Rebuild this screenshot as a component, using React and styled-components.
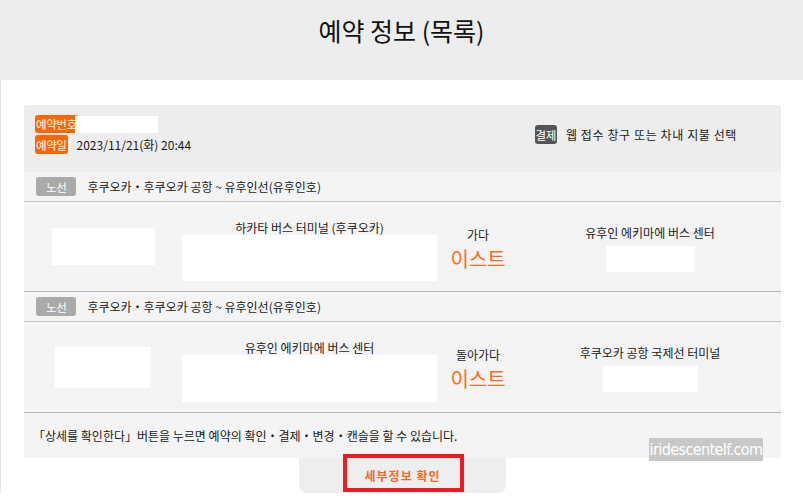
import styled, { createGlobalStyle } from 'styled-components'

const GlobalStyle = createGlobalStyle`
  body {
    margin: 0;
    background: #ffffff;
    font-family: "Noto Sans CJK KR", "Noto Sans", sans-serif;
    color: #1a1a1a;
  }
`

const Page = styled.div`
  position: relative;
  width: 803px;
  min-height: 501px;
  overflow: hidden;
`

const Header = styled.header`
  height: 80px;
  background: #ededed;
  display: flex;
  justify-content: center;
  padding-top: 13px;
  box-sizing: border-box;
`

const Title = styled.h1`
  margin: 0;
  font-size: 25px;
  font-weight: 400;
  line-height: 34px;
  color: #111;
`

const Main = styled.main`
  padding: 25px 22px 0 23px;
  border-left: 1px solid #e4e4e4;
`

const Card = styled.section`
  background: #f4f4f4;
  border-radius: 3px 3px 0 0;
  overflow: hidden;
`

const Summary = styled.div`
  height: 67px;
  background: #ededed;
  display: flex;
  justify-content: space-between;
  align-items: flex-start;
  padding: 10px 44px 0 11px;
  box-sizing: border-box;
`

const InfoList = styled.div`
  display: flex;
  flex-direction: column;
  gap: 2px;
`

const InfoLine = styled.div`
  display: flex;
  align-items: center;
  gap: ${p => p.$gap ?? 9}px;
  font-size: 12px;
  letter-spacing: ${p => p.$spacing || 0}px;
  margin-top: ${p => p.$top || 0}px;
`

const tones = {
  orange: '#ff6600',
  dark: '#555555',
  gray: '#aaaaaa',
}

const Badge = styled.span`
  display: inline-flex;
  align-items: center;
  justify-content: center;
  height: ${p => p.$h || 19}px;
  padding: 0 ${p => p.$pad || 1}px;
  border-radius: 3px;
  background: ${p => tones[p.$tone]};
  color: #ffffff;
  font-size: 11.5px;
  letter-spacing: -0.4px;
  white-space: nowrap;
`

const Redacted = styled.div`
  width: ${p => p.$w}px;
  height: ${p => p.$h}px;
  margin: ${p => p.$margin || 0};
  background: #ffffff;
`

const RouteRow = styled.div`
  height: 29px;
  display: flex;
  align-items: center;
  gap: 11px;
  padding-left: 12px;
  border-bottom: 1px solid #c9c9c9;
  font-size: 12px;
`

const Segment = styled.div`
  height: ${p => p.$h}px;
  display: grid;
  grid-template-columns: 158px 255px 82px 1fr;
  align-items: center;
  justify-items: center;
  border-bottom: 1px solid #b4b4b4;
`

const Stop = styled.div`
  display: flex;
  flex-direction: column;
  align-items: center;
  width: 100%;
  margin-top: ${p => p.$top || 0}px;
`

const StopName = styled.div`
  font-size: 12px;
  line-height: 14px;
  white-space: nowrap;
`

const Direction = styled.div`
  display: flex;
  flex-direction: column;
  align-items: center;
  margin-top: ${p => p.$top || 0}px;
`

const Operator = styled.div`
  font-size: 20px;
  line-height: 26px;
  color: #ff6a1a;
  margin-top: 4px;
`

const Note = styled.p`
  margin: 0;
  height: 45px;
  display: flex;
  align-items: center;
  padding-left: 9px;
  font-size: 12px;
`

const ButtonBar = styled.div`
  display: flex;
  justify-content: center;
`

const DetailButton = styled.button`
  position: relative;
  width: 207px;
  height: 35px;
  border: none;
  border-radius: 0 0 8px 8px;
  background: #eeeeee;
  color: #f26a2a;
  font-family: inherit;
  font-size: 12px;
  font-weight: 700;
  letter-spacing: 1px;
  cursor: pointer;
`

const Highlight = styled.span`
  position: absolute;
  left: 44px;
  top: -4px;
  width: 121px;
  height: 38px;
  border: 4px solid #ed1c24;
  box-sizing: border-box;
`

const Watermark = styled.div`
  position: absolute;
  left: 649px;
  top: 438px;
  width: 114px;
  height: 23px;
  background: #c8c8c8;
  color: #ffffff;
  font-family: "DejaVu Sans Condensed", "Liberation Sans", sans-serif;
  font-size: 16px;
  line-height: 23px;
  letter-spacing: -0.6px;
  text-align: center;
`

const route = '후쿠오카・후쿠오카 공항 ~ 유후인선(유후인호)'

const segments = [
  {
    h: 89,
    leftBox: [103, 37],
    from: '하카타 버스 터미널 (후쿠오카)',
    fromBox: 46,
    dir: '가다',
    to: '유후인 에키마에 버스 센터',
    toBox: [89, 26],
  },
  {
    h: 90,
    leftBox: [96, 41],
    from: '유후인 에키마에 버스 센터',
    fromBox: 47,
    dir: '돌아가다',
    to: '후쿠오카 공항 국제선 터미널',
    toBox: [95, 26],
  },
]

function App() {
  return (
    <Page>
      <GlobalStyle />
      <Header>
        <Title>예약 정보 (목록)</Title>
      </Header>

      <Main>
        <Card>
          <Summary>
            <InfoList>
              <InfoLine $gap={0}>
                <Badge $tone="orange" $h={18}>예약번호</Badge>
                <Redacted $w={83} $h={17} $margin="0 0 0 -3px" />
              </InfoLine>
              <InfoLine>
                <Badge $tone="orange">예약일</Badge>
                2023/11/21(화) 20:44
              </InfoLine>
            </InfoList>
            <InfoLine $top={10} $spacing={0.6}>
              <Badge $tone="dark">결제</Badge>
              웹 접수 창구 또는 차내 지불 선택
            </InfoLine>
          </Summary>

          {segments.map((s, i) => (
            <div key={i}>
              <RouteRow>
                <Badge $tone="gray" $pad={10}>노선</Badge>
                {route}
              </RouteRow>
              <Segment $h={s.h}>
                <Redacted $w={s.leftBox[0]} $h={s.leftBox[1]} />
                <Stop $top={8}>
                  <StopName>{s.from}</StopName>
                  <Redacted $w={255} $h={s.fromBox} />
                </Stop>
                <Direction $top={6}>
                  <StopName>{s.dir}</StopName>
                  <Operator>이스트</Operator>
                </Direction>
                <Stop $top={4}>
                  <StopName>{s.to}</StopName>
                  <Redacted $w={s.toBox[0]} $h={s.toBox[1]} $margin="6px 0 0" />
                </Stop>
              </Segment>
            </div>
          ))}

          <Note>「상세를 확인한다」버튼을 누르면 예약의 확인・결제・변경・캔슬을 할 수 있습니다.</Note>
        </Card>

        <ButtonBar>
          <DetailButton>
            세부정보 확인
            <Highlight />
          </DetailButton>
        </ButtonBar>
      </Main>

      <Watermark>iridescentelf.com</Watermark>
    </Page>
  )
}

export default App
